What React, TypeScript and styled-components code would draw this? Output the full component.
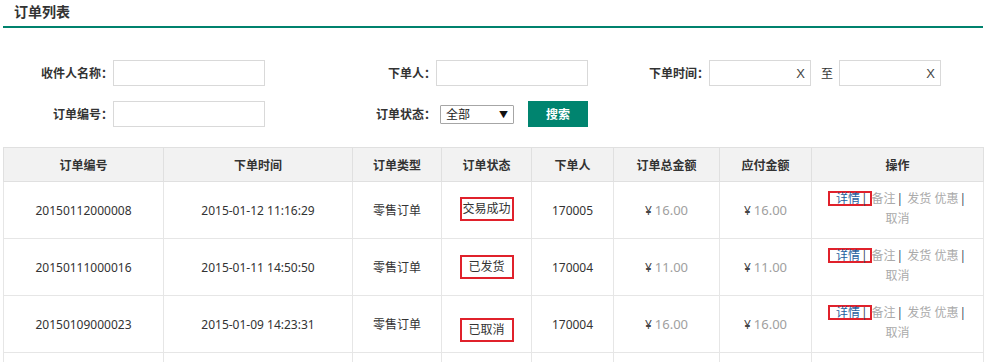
import React from 'react';
import styled, { createGlobalStyle } from 'styled-components';

const GlobalStyle = createGlobalStyle`
    body {
        margin: 0;
        background: #ffffff;
        font-family: "Noto Sans", "Noto Sans CJK SC", sans-serif;
        font-size: 12px;
        color: #333333;
    }
`;

const Page = styled.div`
    width: 980px;
    padding-left: 3px;
`;

const Title = styled.div`
    height: 26px;
    line-height: 24px;
    padding-left: 11px;
    font-size: 14px;
    font-weight: bold;
    color: #333333;
    border-bottom: 2px solid #00826d;
`;

const Filters = styled.div`
    display: grid;
    grid-template-columns: 110px 152px 171px 152px 121px auto;
    grid-auto-rows: 26px;
    row-gap: 15px;
    margin-top: 32px;
    align-items: center;
`;

const Label = styled.label`
    text-align: right;
    font-weight: bold;
    color: #333333;
    white-space: nowrap;
`;

const TextInput = styled.div<{ w? : number }>`
    box-sizing: border-box;
    width: ${ props => props.w || 152 }px;
    height: 26px;
    border: 1px solid #d9d9d9;
    background: #ffffff;
    display: flex;
    align-items: center;
    justify-content: flex-end;
    padding-right: 5px;
    font-size: 13px;
    color: #444444;
    font-family: "Liberation Sans", sans-serif;
`;

const DateGroup = styled.div`
    display: flex;
    align-items: center;
`;

const To = styled.span`
    margin: 0 6px 0 10px;
    font-size: 12px;
    color: #333333;
`;

const StatusCell = styled.div`
    display: flex;
    align-items: center;
`;

const Select = styled.div`
    box-sizing: border-box;
    width: 74px;
    height: 19px;
    margin-left: 4px;
    border: 1px solid #a6a6a6;
    border-radius: 1px;
    display: flex;
    align-items: center;
    justify-content: space-between;
    padding: 0 5px 0 5px;
    font-size: 12px;
    color: #222222;
`;

const Arrow = styled.span`
    font-size: 9px;
    color: #111111;
`;

const SearchButton = styled.button`
    width: 60px;
    height: 26px;
    margin-left: 14px;
    border: none;
    background: #00846f;
    color: #ffffff;
    font-family: "Noto Sans", "Noto Sans CJK SC", sans-serif;
    font-size: 12px;
    font-weight: bold;
    padding: 0;
`;

const Table = styled.table`
    margin-top: 20px;
    width: 980px;
    border-collapse: collapse;
    table-layout: fixed;
`;

const Th = styled.th`
    height: 33px;
    background: #f2f2f2;
    border: 1px solid #e0e0e0;
    font-weight: bold;
    font-size: 12px;
    color: #333333;
    padding: 0;
`;

const Td = styled.td`
    height: 56px;
    border: 1px solid #e6e6e6;
    text-align: center;
    font-size: 12px;
    color: #333333;
    padding: 0 8px;
    vertical-align: middle;
`;

const StatusBox = styled.span<{ shift : number }>`
    display: inline-block;
    width: 50px;
    line-height: 20px;
    border: 2px solid #e0212b;
    margin-top: ${ props => props.shift }px;
    text-align: center;
`;

const Yuan = styled.span`
    color: #444444;
    margin-right: 3px;
`;

const Amount = styled.span`
    color: #a0a0a0;
    font-size: 13px;
`;

const Ops = styled.div`
    margin-top: -2px;
    line-height: 20px;
    text-align: center;
    font-size: 12px;
`;

const OpLine = styled.div`
    white-space: nowrap;
`;

const Detail = styled.span`
    display: inline-block;
    border: 2px solid #e0212b;
    line-height: 11px;
    padding: 0 1px 0 6px;
    color: #1f5f9e;
`;

const Sep = styled.span`
    color: #3a4a5a;
    margin: 0 1px;
`;

const Op = styled.span`
    color: #aaaaaa;
`;

const widths = [160, 189, 89, 90, 82, 106, 92, 172];
const heads = ['订单编号', '下单时间', '订单类型', '订单状态', '下单人', '订单总金额', '应付金额', '操作'];

const orders = [
    { no: '20150112000008', time: '2015-01-12 11:16:29', status: '交易成功', shift: -3, user: '170005', total: '16.00', pay: '16.00' },
    { no: '20150111000016', time: '2015-01-11 14:50:50', status: '已发货', shift: 0, user: '170004', total: '11.00', pay: '11.00' },
    { no: '20150109000023', time: '2015-01-09 14:23:31', status: '已取消', shift: 12, user: '170004', total: '16.00', pay: '16.00' },
];

const App = () => (
    <Page>
        <GlobalStyle />
        <Title>订单列表</Title>
        <Filters>
            <Label>收件人名称：</Label>
            <TextInput />
            <Label>下单人：</Label>
            <TextInput />
            <Label>下单时间：</Label>
            <DateGroup>
                <TextInput w={ 102 }>X</TextInput>
                <To>至</To>
                <TextInput w={ 102 }>X</TextInput>
            </DateGroup>

            <Label>订单编号：</Label>
            <TextInput />
            <Label>订单状态：</Label>
            <StatusCell>
                <Select>全部<Arrow>▼</Arrow></Select>
                <SearchButton>搜索</SearchButton>
            </StatusCell>
        </Filters>
        <Table>
            <colgroup>
                { widths.map((w, i) => <col key={ i } style={ { width: w } } />) }
            </colgroup>
            <thead>
                <tr>
                    { heads.map(h => <Th key={ h }>{ h }</Th>) }
                </tr>
            </thead>
            <tbody>
                { orders.map(o => (
                    <tr key={ o.no }>
                        <Td>{ o.no }</Td>
                        <Td>{ o.time }</Td>
                        <Td>零售订单</Td>
                        <Td><StatusBox shift={ o.shift }>{ o.status }</StatusBox></Td>
                        <Td>{ o.user }</Td>
                        <Td><Yuan>¥</Yuan><Amount>{ o.total }</Amount></Td>
                        <Td><Yuan>¥</Yuan><Amount>{ o.pay }</Amount></Td>
                        <Td>
                            <Ops>
                                <OpLine>
                                    <Detail>详情<Sep>|</Sep></Detail><Op>备注</Op><Sep>|</Sep> <Op>发货</Op> <Op>优惠</Op><Sep>|</Sep>
                                </OpLine>
                                <OpLine><Op>取消</Op></OpLine>
                            </Ops>
                        </Td>
                    </tr>
                )) }
                <tr>
                    { widths.map((w, i) => <Td key={ i } />) }
                </tr>
            </tbody>
        </Table>
    </Page>
);

export default App;
